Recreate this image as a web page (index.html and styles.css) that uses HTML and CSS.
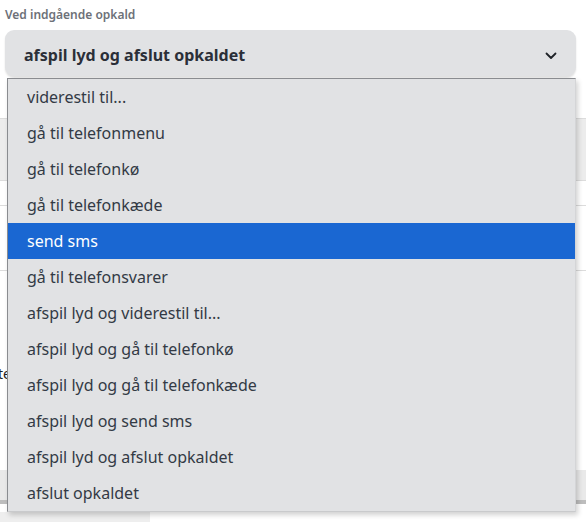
FILE: index.html
```html
<!DOCTYPE html>
<html lang="da">
<head>
<meta charset="utf-8">
<link rel="stylesheet" href="styles.css">
</head>
<body>
<div class="page">
  <div class="field">
    <div class="label">Ved indgående opkald</div>
    <div class="select-wrap">
      <div class="select">
        <span class="select-value">afspil lyd og afslut opkaldet</span>
        <svg class="chevron" width="12" height="8" viewBox="0 0 12 8"><path d="M1.5 1.5 L6 6 L10.5 1.5" fill="none" stroke="#1f2328" stroke-width="1.8" stroke-linecap="round" stroke-linejoin="round"/></svg>
      </div>
      <ul class="menu">
        <li class="opt">viderestil til...</li>
        <li class="opt">gå til telefonmenu</li>
        <li class="opt">gå til telefonkø</li>
        <li class="opt">gå til telefonkæde</li>
        <li class="opt selected">send sms</li>
        <li class="opt">gå til telefonsvarer</li>
        <li class="opt">afspil lyd og viderestil til...</li>
        <li class="opt">afspil lyd og gå til telefonkø</li>
        <li class="opt">afspil lyd og gå til telefonkæde</li>
        <li class="opt">afspil lyd og send sms</li>
        <li class="opt">afspil lyd og afslut opkaldet</li>
        <li class="opt">afslut opkaldet</li>
      </ul>
    </div>
  </div>
  <div class="behind">
    <div class="row row-a"></div>
    <div class="row row-b"></div>
    <div class="row row-c"></div>
    <div class="row row-d"><span class="under-text">te</span></div>
    <div class="row-e"></div>
    <div class="row-f"></div>
    <div class="row-g"></div>
  </div>
</div>
</body>
</html>
```
FILE: styles.css
```css
* { box-sizing: border-box; }
html, body { margin: 0; padding: 0; background: #ffffff; }
body {
  font-family: "Noto Sans", "Open Sans", "Liberation Sans", sans-serif;
  width: 586px;
  height: 522px;
  overflow: hidden;
}
.page { position: relative; }
.field { padding: 5px 10px 0 5px; }
.label {
  font-size: 12px;
  font-weight: 600;
  color: #6d7178;
  line-height: 20px;
  height: 25px;
}
.select-wrap { position: relative; z-index: 2; }
.select {
  height: 46px;
  border-radius: 9px;
  background: #e1e2e4;
  box-shadow: 0 2px 2px rgba(0,0,0,0.12);
  display: flex;
  align-items: center;
  justify-content: space-between;
  padding: 0 19px 0 19px;
}
.select-value {
  font-size: 16px;
  font-weight: 700;
  color: #2b2f38;
  padding-top: 3px;
}
.chevron { margin-top: 5px; }
.menu {
  position: absolute;
  left: 2px;
  right: 0;
  top: 48px;
  margin: 0;
  padding: 0;
  list-style: none;
  background: #e1e2e4;
  border: 1px solid #8a8c90;
  border-right-color: #d4d5d7;
  border-bottom-color: #c9cacc;
  box-shadow: 2px 3px 5px rgba(0,0,0,0.18);
}
.opt {
  height: 36px;
  line-height: 37px;
  padding-left: 19px;
  font-size: 16px;
  color: #333a45;
}
.opt.selected { background: #1a67d2; color: #ffffff; }
.behind { position: absolute; left: 0; top: 118px; width: 586px; z-index: 1; }
.row { border-top: 1px solid #dcdcdc; }
.row-a { height: 62px; background: #ececec; }
.row-b { height: 25px; }
.row-c { height: 65px; }
.row-d { height: 200px; position: relative; }
.under-text { position: absolute; left: -2px; top: 93px; font-size: 14px; color: #222; }
.row-e { height: 30px; background: #e9e9e9; }
.row-f { height: 4px; background: #bdbdbd; }
.row-g { height: 10px; margin-top: 8px; width: 150px; background: #eeeeee; }
```
